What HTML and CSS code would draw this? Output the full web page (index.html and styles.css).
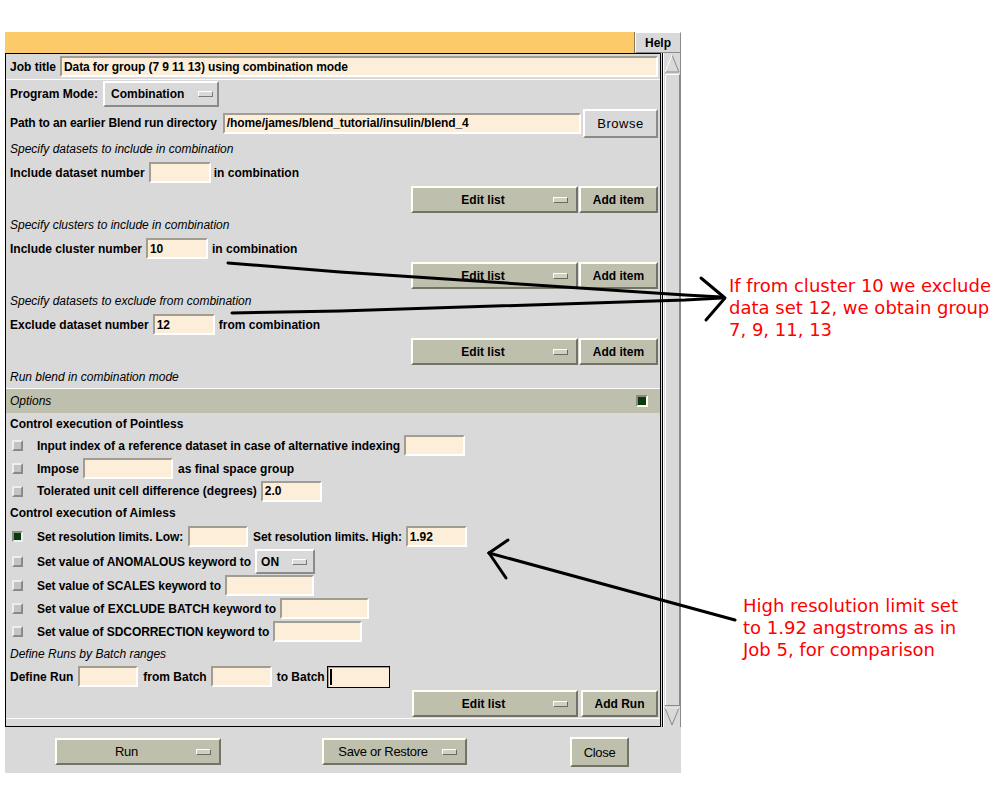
FILE: index.html
```html
<!DOCTYPE html>
<html>
<head>
<meta charset="utf-8">
<title>Blend</title>
<link rel="stylesheet" href="styles.css">
</head>
<body>
<div class="app">
  <div class="topbar">
    <div class="titlebar"></div>
    <div class="help">Help</div>
  </div>
  <div class="main">
    <div class="panel">
      <div class="row job">
        <span class="lbl">Job title</span>
        <div class="field grow job-field">Data for group (7 9 11 13) using combination mode</div>
      </div>
      <div class="sep"></div>
      <div class="row mode">
        <span class="lbl">Program Mode:</span>
        <div class="menubtn mode-btn"><span class="mtext">Combination</span><span class="ind"></span></div>
      </div>
      <div class="row path">
        <span class="lbl t1">Path to an earlier Blend run directory</span>
        <div class="field grow path-field">/home/james/blend_tutorial/insulin/blend_4</div>
        <div class="btn browse">Browse</div>
      </div>

      <div class="row head">Specify datasets to include in combination</div>
      <div class="row frow">
        <span class="lbl">Include dataset number</span>
        <div class="field w62 gl4"></div>
        <span class="lbl gl3">in combination</span>
      </div>
      <div class="row erow">
        <div class="kbtn menu editlist"><span class="ktext">Edit list</span><span class="kind"></span></div>
        <div class="kbtn additem">Add item</div>
      </div>

      <div class="row head">Specify clusters to include in combination</div>
      <div class="row frow">
        <span class="lbl">Include cluster number</span>
        <div class="field w62 gl4">10</div>
        <span class="lbl gl4">in combination</span>
      </div>
      <div class="row erow">
        <div class="kbtn menu editlist"><span class="ktext">Edit list</span><span class="kind"></span></div>
        <div class="kbtn additem">Add item</div>
      </div>

      <div class="row head">Specify datasets to exclude from combination</div>
      <div class="row frow">
        <span class="lbl">Exclude dataset number</span>
        <div class="field w62 gl4">12</div>
        <span class="lbl gl4">from combination</span>
      </div>
      <div class="row erow">
        <div class="kbtn menu editlist"><span class="ktext">Edit list</span><span class="kind"></span></div>
        <div class="kbtn additem">Add item</div>
      </div>

      <div class="row head">Run blend in combination mode</div>
      <div class="sep"></div>
      <div class="row options">
        <span class="opt-title">Options</span>
        <span class="opt-ind"></span>
      </div>

      <div class="row sub h21">Control execution of Pointless</div>
      <div class="row crow h23">
        <span class="cb"></span>
        <span class="lbl t2">Input index of a reference dataset in case of alternative indexing</span>
        <div class="field w61 gl4"></div>
      </div>
      <div class="row crow h23">
        <span class="cb"></span>
        <span class="lbl">Impose</span>
        <div class="field w90 gl4"></div>
        <span class="lbl gl5">as final space group</span>
      </div>
      <div class="row crow h22">
        <span class="cb"></span>
        <span class="lbl">Tolerated unit cell difference (degrees)</span>
        <div class="field w61 gl4">2.0</div>
      </div>
      <div class="row sub h22">Control execution of Aimless</div>
      <div class="row crow h25">
        <span class="cb on"></span>
        <span class="lbl t1">Set resolution limits. Low:</span>
        <div class="field w60 gl5"></div>
        <span class="lbl t1 gl5">Set resolution limits. High:</span>
        <div class="field w61 gl4">1.92</div>
      </div>
      <div class="row crow h25">
        <span class="cb"></span>
        <span class="lbl t2">Set value of ANOMALOUS keyword to</span>
        <div class="menubtn on-btn gl4"><span class="mtext">ON</span><span class="ind"></span></div>
      </div>
      <div class="row crow h23">
        <span class="cb"></span>
        <span class="lbl t3">Set value of SCALES keyword to</span>
        <div class="field w89 gl4"></div>
      </div>
      <div class="row crow h23">
        <span class="cb"></span>
        <span class="lbl">Set value of EXCLUDE BATCH keyword to</span>
        <div class="field w89 gl4"></div>
      </div>
      <div class="row crow h23">
        <span class="cb"></span>
        <span class="lbl t3">Set value of SDCORRECTION keyword to</span>
        <div class="field w89 gl4"></div>
      </div>
      <div class="row head h21">Define Runs by Batch ranges</div>
      <div class="row frow">
        <span class="lbl">Define Run</span>
        <div class="field w60 gl5"></div>
        <span class="lbl gl5">from Batch</span>
        <div class="field w61 gl4"></div>
        <span class="lbl gl5">to Batch</span>
        <div class="field focus w63 gl2"><span class="cursor"></span></div>
      </div>
      <div class="row erow last">
        <div class="kbtn menu editlist2"><span class="ktext">Edit list</span><span class="kind"></span></div>
        <div class="kbtn addrun">Add Run</div>
      </div>
      <div class="sep"></div>
    </div>
    <div class="scrollbar">
      <svg width="20" height="674" viewBox="0 0 20 674">
        <rect x="0" y="0" width="20" height="674" fill="#d9d9d9"/>
        <line x1="1.5" y1="0" x2="1.5" y2="674" stroke="#000" stroke-width="1"/>
        <line x1="2.5" y1="0" x2="2.5" y2="674" stroke="#ffffff" stroke-width="1"/>
        <line x1="19.5" y1="0" x2="19.5" y2="674" stroke="#8a8a8a" stroke-width="1"/>
        <polygon points="11,2 18,19 4,19" fill="#d9d9d9" stroke="#8a8a8a" stroke-width="1"/>
        <polyline points="4,19 11,2" fill="none" stroke="#ffffff" stroke-width="1.2"/>
        <rect x="4.5" y="21.5" width="14" height="631" fill="#d9d9d9" stroke="#8a8a8a" stroke-width="1"/>
        <polyline points="4.5,652 4.5,21.5 18.5,21.5" fill="none" stroke="#ffffff" stroke-width="1"/>
        <polygon points="4,655 18,655 11,672" fill="#d9d9d9" stroke="#8a8a8a" stroke-width="1"/>
        <polyline points="4,655 18,655" fill="none" stroke="#ffffff" stroke-width="1.2"/>
      </svg>
    </div>
  </div>
  <div class="footer">
    <div class="kbtn menu run"><span class="ktext">Run</span><span class="kind"></span></div>
    <div class="kbtn menu save"><span class="ktext">Save or Restore</span><span class="kind"></span></div>
    <div class="kbtn close">Close</div>
  </div>
</div>

<svg class="arrows" width="1000" height="800" viewBox="0 0 1000 800">
  <g fill="none" stroke="#000" stroke-width="3" stroke-linecap="round" stroke-linejoin="round">
    <polyline points="228,263 340,272 685,295 722,297"/>
    <polyline points="232,313 340,311 685,300 722,298"/>
    <polyline points="701,278 725,298 706,320"/>
    <line x1="489" y1="553" x2="735" y2="620"/>
    <line x1="489" y1="553" x2="508" y2="540"/>
    <line x1="489" y1="553" x2="506" y2="578"/>
  </g>
</svg>
<div class="note note1">If from cluster 10 we exclude<br>data set 12, we obtain group<br>7, 9, 11, 13</div>
<div class="note note2">High resolution limit set<br>to 1.92 angstroms as in<br>Job 5, for comparison</div>
</body>
</html>
```

FILE: styles.css
```css
* { box-sizing: border-box; }

body {
  margin: 0;
  width: 1000px;
  height: 800px;
  overflow: hidden;
  position: relative;
  background: #ffffff;
  font-family: "Liberation Sans", Arial, sans-serif;
  font-size: 12px;
  color: #000;
}

.app {
  margin: 32px 0 0 5px;
  width: 676px;
  height: 741px;
  background: #d9d9d9;
  display: flex;
  flex-direction: column;
}

/* top strip */
.topbar { display: flex; height: 21px; }
.titlebar { width: 630px; background: #fdca6a; border-right: 1px solid #8a7a55; }
.help {
  width: 46px;
  background: #d9d9d9;
  border: 1px solid;
  border-color: #ffffff #8a8a8a #8a8a8a #ffffff;
  font-weight: bold;
  display: flex;
  align-items: center;
  justify-content: center;
}

/* main area */
.main { display: flex; height: 674px; }
.panel {
  width: 656px;
  border: 1px solid #000;
  padding: 0 2px 0 4px;
  display: flex;
  flex-direction: column;
}
.scrollbar { width: 20px; }
.scrollbar svg { display: block; }

.row {
  display: flex;
  align-items: center;
  white-space: nowrap;
  flex: none;
}
.lbl { font-weight: bold; }
.t1 { letter-spacing: -0.12px; }
.t2 { letter-spacing: -0.045px; }
.t3 { letter-spacing: -0.07px; }
.sep { height: 1px; background: #fbfbfb; margin: 0 -2px 0 -4px; flex: none; }

.job { height: 25px; }
.job .lbl { margin-right: 4px; }
.job-field { height: 20px; }
.mode { height: 28px; }
.path { height: 30px; }
.path .lbl { margin-right: 6px; }
.head { height: 22px; font-style: italic; }
.frow { height: 25px; }
.erow { height: 29px; justify-content: flex-end; gap: 1px; }
.erow.last { gap: 3px; }
.sub { font-weight: bold; }
.h21 { height: 21px; }
.h22 { height: 22px; }
.h23 { height: 23px; }
.h25 { height: 25px; }

.grow { flex: 1; min-width: 0; }
.gl2 { margin-left: 2px; }
.gl3 { margin-left: 3px; }
.gl4 { margin-left: 4px; }
.gl5 { margin-left: 5px; }
.w60 { width: 60px; }
.w61 { width: 61px; }
.w62 { width: 62px; }
.w63 { width: 63px; }
.w89 { width: 89px; }
.w90 { width: 90px; }

/* entry fields */
.field {
  height: 21px;
  background: #fdeed9;
  border: 2px solid;
  border-color: #a19d90 #ffffff #ffffff #a19d90;
  font-weight: bold;
  letter-spacing: -0.1px;
  padding-left: 2px;
  display: flex;
  align-items: center;
  overflow: hidden;
  white-space: nowrap;
}
.field.focus {
  border: 1px solid #000;
  box-shadow: inset 1px 1px 0 #a19d90;
  padding-left: 2px;
  height: 22px;
}
.cursor { display: block; width: 2px; height: 16px; background: #000; }

/* gray menubuttons */
.menubtn {
  height: 26px;
  background: #d9d9d9;
  border: 2px solid;
  border-color: #ffffff #8a8a8a #8a8a8a #ffffff;
  display: flex;
  align-items: center;
  font-weight: bold;
}
.mode-btn { width: 116px; margin-left: 5px; padding: 0 4px 0 6px; }
.on-btn { width: 60px; height: 25px; padding: 0 6px 0 4px; }
.mtext { flex: 1; }
.ind {
  width: 15px;
  height: 6px;
  background: #d9d9d9;
  border: 1px solid;
  border-color: #ffffff #7a7a7a #7a7a7a #ffffff;
}

.browse {
  width: 75px;
  height: 29px;
  margin-left: 2px;
  background: #d9d9d9;
  border: 2px solid;
  border-color: #ffffff #8a8a8a #8a8a8a #ffffff;
  font-size: 13px;
  letter-spacing: 0.5px;
  display: flex;
  align-items: center;
  justify-content: center;
}

/* khaki buttons */
.kbtn {
  height: 27px;
  background: #bfbfae;
  border: 2px solid;
  border-color: #fffff4 #727266 #727266 #fffff4;
  font-weight: bold;
  display: flex;
  align-items: center;
  justify-content: center;
}
.kbtn.menu { justify-content: flex-start; padding-right: 8px; }
.ktext { flex: 1; text-align: center; }
.kind {
  width: 15px;
  height: 6px;
  background: #cfcfc2;
  border: 1px solid;
  border-color: #ffffff #6a6a5e #6a6a5e #ffffff;
}
.editlist { width: 167px; }
.additem { width: 79px; }
.editlist2 { width: 166px; }
.addrun { width: 77px; }

/* options bar */
.options {
  height: 24px;
  margin: 0 -2px 0 -4px;
  padding: 0 12px 0 4px;
  background: #bfbfae;
  justify-content: space-between;
}
.opt-title { font-style: italic; }
.opt-ind {
  width: 12px;
  height: 12px;
  background: #0b3a0b;
  border: 2px solid;
  border-color: #8a8a7e #fffff4 #fffff4 #8a8a7e;
}

/* checkbox rows */
.cb {
  width: 11px;
  height: 11px;
  margin: 0 14px 0 2px;
  background: #c4c4c4;
  border: 2px solid;
  border-color: #eeeeee #8a8a8a #8a8a8a #eeeeee;
  flex: none;
}
.cb.on {
  background: #0b3a0b;
  border-color: #8a8a8a #eeeeee #eeeeee #8a8a8a;
}

/* footer */
.footer {
  height: 46px;
  display: flex;
  align-items: flex-start;
  padding: 11px 0 0 50px;
}
.footer .kbtn { font-weight: normal; font-size: 13px; letter-spacing: -0.3px; }
.run { width: 166px; }
.save { width: 145px; margin-left: 101px; }
.close { width: 59px; height: 30px; margin-left: 103px; margin-top: -1px; }

/* annotations */
.arrows { position: absolute; left: 0; top: 0; pointer-events: none; }
.note {
  position: absolute;
  font-family: "DejaVu Sans", sans-serif;
  font-size: 18px;
  line-height: 22px;
  color: #ff0000;
  white-space: nowrap;
}
.note1 { left: 729px; top: 275px; }
.note2 { left: 743px; top: 595px; }
```
